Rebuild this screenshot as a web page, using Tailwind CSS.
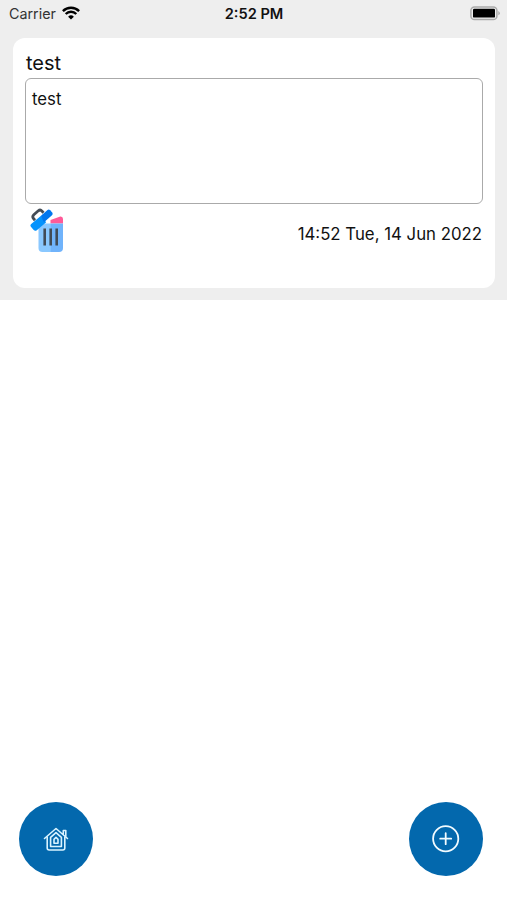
<!DOCTYPE html>
<html lang="en">

<head>
    <meta charset="UTF-8">
    <title>Notes</title>
    <meta name="viewport" content="width=device-width, initial-scale=1.0">
    <script src="https://cdn.jsdelivr.net/npm/@tailwindcss/browser@4"></script>
</head>

<body class="bg-white text-[#111] font-['Inter',sans-serif]">
    <div class="flex flex-col h-[900px] overflow-hidden">
        <div class="bg-[#eeeeee] h-[300px] shrink-0">
            <!-- status bar -->
            <header class="grid grid-cols-3 items-center h-[27px] pl-[9px] pr-[7px] text-sm leading-none">
                <div class="flex items-center gap-[6px]">
                    <span class="pt-[2px] text-[14.3px] text-[#333]">Carrier</span>
                    <svg class="w-[18px] h-[14px]" viewBox="0 0 18 14" fill="none" stroke="#000" stroke-width="2.4">
                        <path d="M.9 5.1a11.5 11.5 0 0 1 16.2 0M3.7 8a7.5 7.5 0 0 1 10.6 0" />
                        <path d="M9 13.6 6.1 10.7a4.1 4.1 0 0 1 5.8 0Z" fill="#000" stroke="none" />
                    </svg>
                </div>
                <span class="pt-[2px] pr-[1px] text-center text-[14.6px] font-semibold whitespace-nowrap">2:52 PM</span>
                <svg class="justify-self-end w-[30px] h-[15px]" viewBox="0 0 30 15">
                    <rect x=".9" y=".9" width="26" height="12.6" rx="3.6" fill="#eee" stroke="#aaa" stroke-width="1.5" />
                    <rect x="3" y="2.8" width="22" height="8.8" rx="1.2" fill="#000" />
                    <path d="M28.3 5.1q1.5.8 1.5 2.1t-1.5 2.1Z" fill="#aaa" />
                </svg>
            </header>

            <!-- note card -->
            <article class="mt-[11px] ml-[13px] mr-[12px] h-[250px] rounded-[12px] bg-white px-[12px] pt-[12px]">
                <h2 class="h-[28px] pl-[1px] text-[20px] leading-[26px]">test</h2>
                <div class="h-[126px] rounded-[6px] border border-[#aaa] px-[6px] pt-[8px] text-[16.8px] leading-[24px]">test</div>
                <div class="flex justify-between">
                    <svg class="w-[34px] h-[44px] ml-[5px] mt-[4px]" viewBox="0 -.5 34 44">
                        <path d="m5 11.8-1.600-1.800q-1.400-2 .4-3.700l4.500-4q2-1.600 3.700.3l1.500 1.700" fill="none" stroke="#444c55" stroke-width="2.8" />
                        <path d="M20.500 15V11.500L30.300 8q2.700-.3 2.700 2.500V15Z" fill="#ff5a98" />
                        <path d="M8.500 15h12.500v28.500h-8.500q-4 0-4-4Z" fill="#8ac8ff" />
                        <path d="M20.700 15H33v24.500q0 4-4 4h-8.300Z" fill="#70b3fb" />
                        <path d="M14.700 20v17M20.700 20v17M26.700 20v17" stroke="#414b57" stroke-width="2.600" />
                        <path d="m1.200 15.500 9.500-8 5.500 6.200-9.700 8.200q-1.500 1-2.800-.4L.9 18.200q-1.100-1.400.3-2.700Z" fill="#0593fc" />
                        <path d="m10.700 7.500 6.800-6q1.400-1 2.700.3l2 2.200q1.200 1.500-.2 2.800l-6 5.300-2 1.600Z" fill="#0077ef" />
                    </svg>
                    <time class="mt-[19px] mr-[1px] text-[16.8px] leading-[22px] whitespace-nowrap">14:52 Tue, 14 Jun 2022</time>
                </div>
            </article>
        </div>

        <main class="flex-1"></main>

        <!-- bottom buttons -->
        <nav class="flex justify-between pl-[19px] pr-[24px] pb-[24px]">
            <button class="flex items-center justify-center w-[74px] h-[74px] rounded-full bg-[#0368ad]" aria-label="Home">
                <svg class="w-[26px] h-[26px]" viewBox="0 0 26 26" fill="none" stroke="#d9f3ff" stroke-width="1.6" stroke-linecap="round" stroke-linejoin="round">
                    <path d="M1.500 12.500 13 2.500l11.500 10M20.300 8.500V4.500h2.500v6" />
                    <path d="M4.200 11v11q0 2 2 2h13.600q2 0 2-2V11" />
                    <path d="M7.600 11.300 13 6.600l5.400 4.700v9.200H7.600Z" />
                    <path d="M11 13.400 13 11.300l2 2.100v3.800h-4Z" />
                </svg>
            </button>
            <button class="flex items-center justify-center w-[74px] h-[74px] rounded-full bg-[#0368ad]" aria-label="Add">
                <svg class="w-[28px] h-[28px]" viewBox="0 0 28 28" fill="none" stroke="#f2fbff" stroke-width="1.8" stroke-linecap="round">
                    <circle cx="13.700" cy="13.700" r="12.600" />
                    <path d="M13.700 8.200v11M8.200 13.700h11" />
                </svg>
            </button>
        </nav>
    </div>
</body>

</html>
